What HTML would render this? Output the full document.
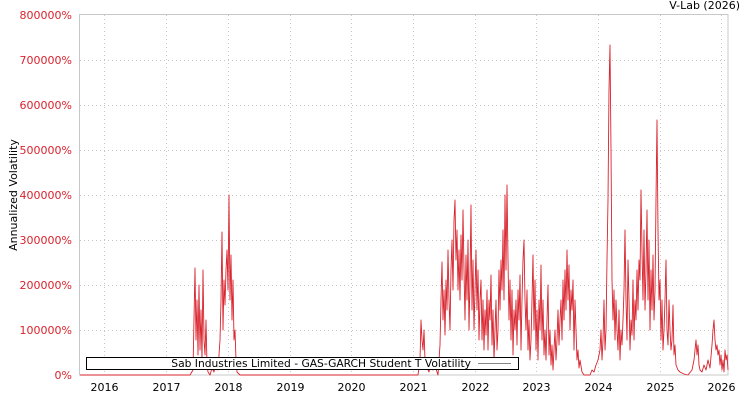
<!DOCTYPE html>
<html><head><meta charset="utf-8"><style>
html,body{margin:0;padding:0;background:#fff;width:750px;height:400px;overflow:hidden}
svg{display:block;font-family:"DejaVu Sans","Liberation Sans",sans-serif;font-size:11px}
</style></head><body>
<svg width="750" height="400" xmlns="http://www.w3.org/2000/svg">
<rect width="750" height="400" fill="#fff"/>
<text x="740" y="9" text-anchor="end" fill="#000">V-Lab (2026)</text>
<g stroke="#c8c8c8" stroke-dasharray="1,3" stroke-width="1">
<line x1="104.5" y1="15" x2="104.5" y2="375"/><line x1="166.5" y1="15" x2="166.5" y2="375"/><line x1="228.5" y1="15" x2="228.5" y2="375"/><line x1="290.5" y1="15" x2="290.5" y2="375"/><line x1="351.5" y1="15" x2="351.5" y2="375"/><line x1="413.5" y1="15" x2="413.5" y2="375"/><line x1="475.5" y1="15" x2="475.5" y2="375"/><line x1="536.5" y1="15" x2="536.5" y2="375"/><line x1="598.5" y1="15" x2="598.5" y2="375"/><line x1="660.5" y1="15" x2="660.5" y2="375"/><line x1="721.5" y1="15" x2="721.5" y2="375"/>
<line x1="80" y1="60.5" x2="728" y2="60.5"/><line x1="80" y1="105.5" x2="728" y2="105.5"/><line x1="80" y1="150.5" x2="728" y2="150.5"/><line x1="80" y1="195.5" x2="728" y2="195.5"/><line x1="80" y1="240.5" x2="728" y2="240.5"/><line x1="80" y1="285.5" x2="728" y2="285.5"/><line x1="80" y1="330.5" x2="728" y2="330.5"/>
</g>
<rect x="79.5" y="14.5" width="648.5" height="360.5" fill="none" stroke="#c8c8c8"/>
<g fill="#d9232d" text-anchor="end">
<text x="72" y="19">800000%</text><text x="72" y="64">700000%</text><text x="72" y="109">600000%</text><text x="72" y="154">500000%</text><text x="72" y="199">400000%</text><text x="72" y="244">300000%</text><text x="72" y="289">200000%</text><text x="72" y="334">100000%</text><text x="72" y="379">0%</text>
</g>
<text transform="translate(17,195) rotate(-90)" text-anchor="middle" fill="#000">Annualized Volatility</text>
<g fill="#000" text-anchor="middle">
<text x="104.5" y="391">2016</text><text x="166.5" y="391">2017</text><text x="228.5" y="391">2018</text><text x="290.5" y="391">2019</text><text x="351.5" y="391">2020</text><text x="413.5" y="391">2021</text><text x="475.5" y="391">2022</text><text x="536.5" y="391">2023</text><text x="598.5" y="391">2024</text><text x="660.5" y="391">2025</text><text x="721.5" y="391">2026</text>
</g>
<polyline fill="none" stroke="#d9232d" stroke-width="0.9" stroke-linejoin="round" points="80,375 190,375 193,370 195,268 196,340 197,300 198,355 199,285 200,350 201,310 202,360 203,270 204,340 205,355 206,320 207,365 208,372 210,375 212,368 214,372 216,360 218,370 220,340 221,300 222,232 223,330 224,280 225,305 226,270 227,250 228,290 229,195 230,300 231,255 232,320 233,280 234,340 235,330 236,360 237,372 240,375 418,375 420,360 421,320 422,340 423,350 424,330 425,360 427,368 429,372 431,360 433,370 435,365 437,372 438,375 440,345 441,300 442,262 443,320 444,290 445,335 446,280 447,310 448,250 449,300 450,330 451,270 452,240 453,290 454,220 455,200 456,260 457,230 458,290 459,250 460,300 461,235 462,280 463,210 464,270 465,320 466,255 467,300 468,240 469,330 470,280 471,205 472,310 473,260 474,330 475,290 476,250 477,310 478,270 479,340 480,300 481,280 482,340 483,300 484,350 485,310 486,335 487,290 488,350 489,300 490,320 491,275 492,345 493,310 494,360 495,330 496,300 497,350 498,330 499,270 500,310 501,260 502,290 503,230 504,300 505,195 506,270 507,185 508,260 509,320 510,280 511,340 512,290 513,355 514,310 515,330 516,300 517,345 518,290 519,320 520,275 521,350 522,300 523,260 524,240 525,300 526,330 527,290 528,350 529,320 530,360 531,340 532,300 533,255 534,330 535,280 536,350 537,310 538,360 539,300 540,330 541,265 542,340 543,300 544,355 545,330 546,360 547,320 548,285 549,355 550,330 551,365 552,345 553,370 554,350 555,330 556,360 557,340 558,310 559,345 560,320 561,300 562,340 563,280 564,320 565,270 566,310 567,250 568,300 569,265 570,330 571,290 572,310 573,280 574,350 575,300 576,330 577,360 578,350 579,368 580,360 582,372 584,375 590,375 592,370 594,372 596,365 598,360 600,350 601,330 602,360 603,340 604,300 605,350 606,330 607,260 608,200 609,90 610,45 611,150 612,280 613,320 614,290 615,340 616,300 617,330 618,350 619,310 620,360 621,330 622,345 623,320 624,290 625,230 626,300 627,340 628,260 629,300 630,350 631,320 632,335 633,280 634,340 635,300 636,320 637,270 638,310 639,260 640,280 641,190 642,250 643,300 644,230 645,310 646,270 647,210 648,300 649,240 650,330 651,270 652,310 653,255 654,320 655,290 656,200 657,120 658,230 659,300 660,280 661,340 662,300 663,350 664,330 665,300 666,260 667,330 668,345 669,300 670,330 671,350 672,340 673,305 674,355 675,345 676,365 678,370 680,372 684,374 688,375 692,370 694,360 696,340 697,355 698,345 699,365 700,370 702,372 704,365 706,370 708,360 710,368 712,345 713,330 714,320 715,340 716,350 717,345 718,355 719,350 720,365 721,355 722,370 723,360 724,372 725,350 726,360 727,355 728,370"/>
<rect x="86.5" y="357.5" width="432" height="12" fill="#fff" stroke="#000"/>
<text x="471" y="367" text-anchor="end" fill="#000" font-size="10.7">Sab Industries Limited - GAS-GARCH Student T Volatility</text>
<line x1="478" y1="363.5" x2="511" y2="363.5" stroke="#888" stroke-width="1"/>
</svg>
</body></html>
